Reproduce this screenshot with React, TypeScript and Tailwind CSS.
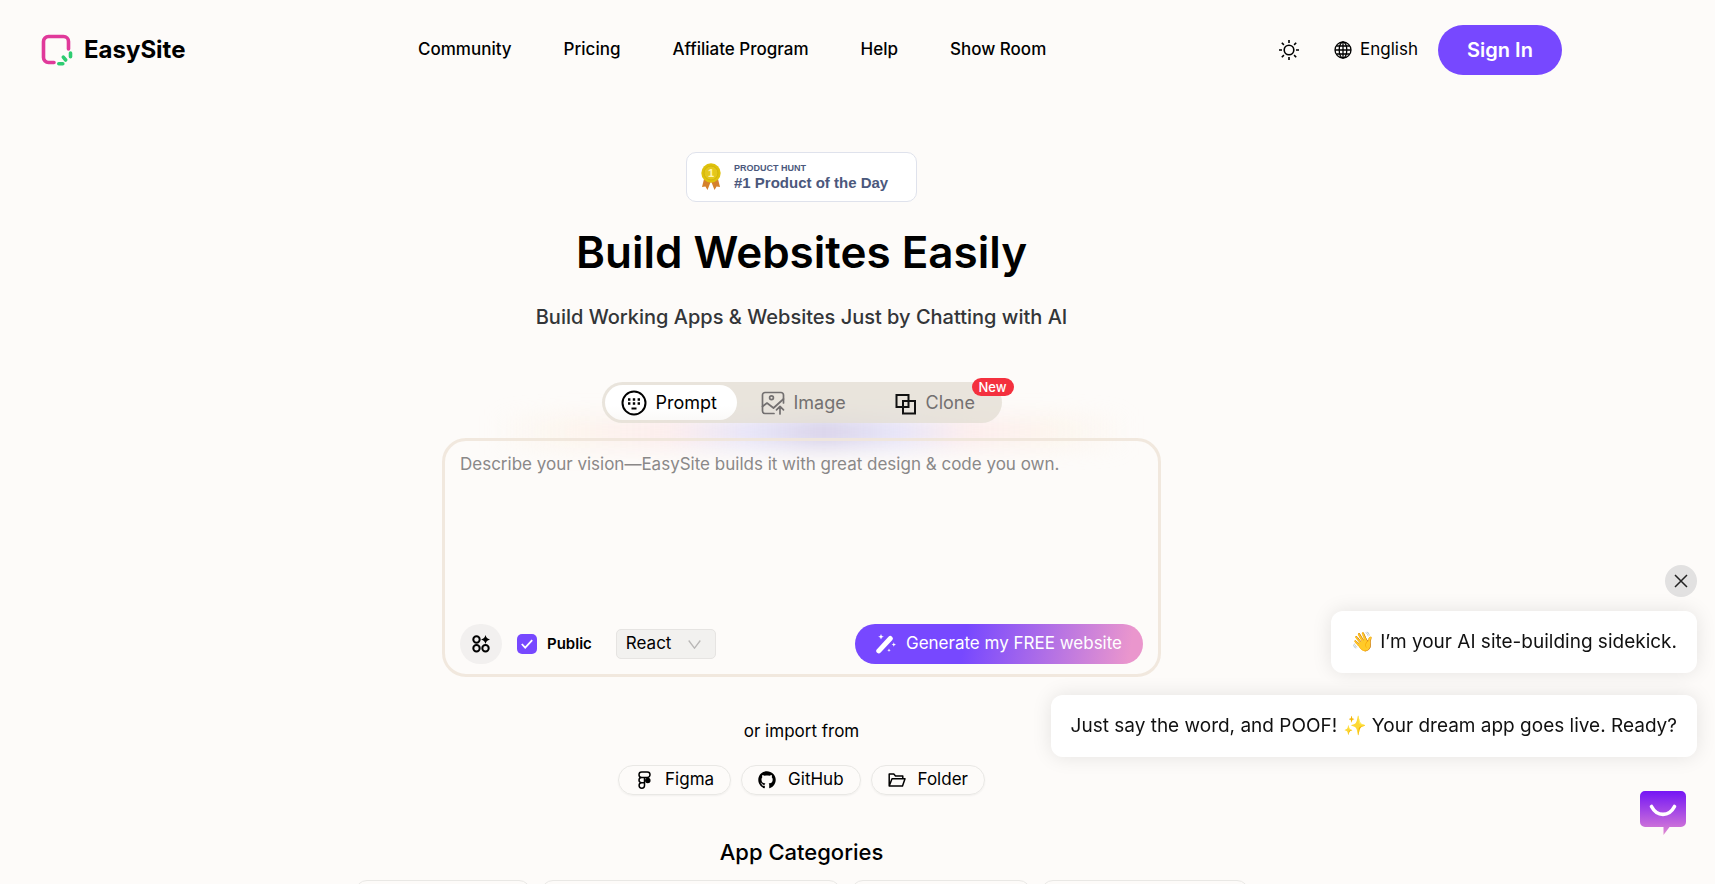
import React from "react";
import { FaGithub } from "react-icons/fa";

const navLinks = ["Community", "Pricing", "Affiliate Program", "Help", "Show Room"];

function Logo() {
  return (
    <a href="#" className="flex items-center gap-[11px]">
      <svg width="32" height="32" viewBox="0 0 32 32" fill="none" strokeLinecap="round" aria-hidden="true">
        <path d="M27.500 15V7.500a5 5 0 0 0-5-5H7.500a5 5 0 0 0-5 5v16a5 5 0 0 0 5 5H13" stroke="#e0399a" strokeWidth="3.600" />
        <path d="M29.500 19v3.800M22.300 23.200l2.400 2.800M17.800 29.800h4" stroke="#2ecc71" strokeWidth="3.600" />
      </svg>
      <span className="text-2xl font-bold">EasySite</span>
    </a>
  );
}

function SunIcon() {
  return (
    <svg width="22" height="22" viewBox="0 0 22 22" fill="none" stroke="currentColor" strokeWidth="1.600" aria-hidden="true">
      <circle cx="11" cy="11" r="4.800" />
      <path d="M11 1v3M11 18v3M1 11h3M18 11h3M3.800 3.800l2.100 2.100M16.100 16.100l2.100 2.100M3.800 18.200l2.100-2.100M16.100 5.900l2.100-2.100" />
    </svg>
  );
}

function GlobeIcon() {
  return (
    <svg width="18" height="18" viewBox="0 0 18 18" fill="none" stroke="currentColor" strokeWidth="1.300" aria-hidden="true">
      <circle cx="9" cy="9" r="8" />
      <ellipse cx="9" cy="9" rx="3.800" ry="8" />
      <path d="M9 1v16M1 9h16M2.300 5h13.400M2.300 13h13.400" />
    </svg>
  );
}

function MedalIcon() {
  return (
    <svg width="20" height="28" viewBox="0 0 20 28" aria-hidden="true">
      <path d="M3 16 1 24l3.400-.6L6.500 27 10 18zM17 16l2 8-3.400-.6L13.500 27 10 18z" fill="#d5812c" />
      <circle cx="10" cy="10" r="9.700" fill="#dfc20c" />
      <circle cx="10" cy="10" r="7" fill="#e4c71c" stroke="#d2b40a" strokeWidth="1" />
      <text x="10" y="14" textAnchor="middle" fontSize="11" fontWeight="700" fill="#fff6b8" fontFamily="Liberation Sans, sans-serif">1</text>
    </svg>
  );
}

function PromptIcon() {
  return (
    <svg width="26" height="26" viewBox="0 0 26 26" fill="none" stroke="currentColor" aria-hidden="true">
      <circle cx="13" cy="13" r="11.500" strokeWidth="2" />
      <path d="M7 9.500h2.400M11.800 9.500h2.400M16.600 9.500H19M7 13.500h2.400M11.800 13.500h2.400M16.600 13.500H19" strokeWidth="2.400" />
      <path d="M10.500 18.500h5" strokeWidth="2" />
    </svg>
  );
}

function ImageIcon() {
  return (
    <svg width="24" height="24" viewBox="0 0 24 24" fill="none" stroke="currentColor" strokeWidth="1.700" strokeLinecap="round" strokeLinejoin="round" aria-hidden="true">
      <path d="M22.500 12V4a2.500 2.500 0 0 0-2.500-2.500H4A2.500 2.500 0 0 0 1.500 4v16A2.500 2.500 0 0 0 4 22.500h9" />
      <circle cx="10.500" cy="6.800" r="1.900" />
      <path d="M1.500 15.500 6 12l6.500 5 10-9" />
      <path d="M19 23v-7.500M15.500 18.800l3.500-3.500 3.500 3.500" />
    </svg>
  );
}

function CloneIcon() {
  return (
    <svg width="22" height="24" viewBox="0 0 22 24" fill="none" stroke="#111" strokeWidth="2" aria-hidden="true">
      <path d="M1.500 4h12v12h-12zM8 10h12v12.500H8z" />
    </svg>
  );
}

function AppsIcon() {
  return (
    <svg width="18" height="18" viewBox="0 0 18 18" fill="none" stroke="currentColor" strokeWidth="2" aria-hidden="true">
      <circle cx="4.500" cy="4.500" r="3.200" />
      <circle cx="4.500" cy="13.300" r="3.200" />
      <circle cx="13.500" cy="13.300" r="3.200" />
      <path d="M13.500 0c.8 2.700 1.700 3.700 4.500 4.500-2.800.8-3.700 1.800-4.500 4.500-.8-2.700-1.700-3.700-4.500-4.500 2.800-.8 3.700-1.800 4.500-4.500z" fill="currentColor" stroke="none" />
    </svg>
  );
}

function WandIcon() {
  return (
    <svg width="20" height="20" viewBox="0 0 20 20" fill="currentColor" aria-hidden="true">
      <path d="M2.800 16.900 14.300 4.500" stroke="currentColor" strokeWidth="5" strokeLinecap="round" />
      <path d="M5 0l.8 1.900 2 .8-2 .8L5 5.500l-.8-2-2-.8 2-.8zM17.800 8.300l.6 1.600 1.600.6-1.600.7-.6 1.600-.6-1.600-1.600-.7 1.600-.6zM13 14.500l.5 1.200 1.200.5-1.200.5-.5 1.200-.5-1.200-1.200-.5 1.200-.5z" />
    </svg>
  );
}

function FigmaIcon() {
  return (
    <svg width="13" height="18" viewBox="0 0 13 18" fill="none" stroke="currentColor" strokeWidth="1.500" aria-hidden="true">
      <path d="M3.700 1h5.600a2.700 2.700 0 0 1 0 5.400H3.700a2.700 2.700 0 0 1 0-5.400zM6.500 6.400v8.100a2.700 2.700 0 1 1-2.800-2.700h2.800M3.700 6.400a2.700 2.700 0 0 0 0 5.400" />
      <circle cx="9.800" cy="9.600" r="2" fill="currentColor" />
    </svg>
  );
}

function FolderIcon() {
  return (
    <svg width="18" height="14" viewBox="0 0 18 14" fill="none" stroke="currentColor" strokeWidth="1.500" strokeLinejoin="round" aria-hidden="true">
      <path d="M1.200 13V1h4.600l1.700 2h7.300v2.700M1.200 13l2.800-7.300h13L14.500 13z" />
    </svg>
  );
}

function ChatIcon() {
  return (
    <svg width="46" height="45" viewBox="0 0 46 45" fill="none" aria-hidden="true">
      <defs>
        <linearGradient id="chat-fill" x1="0" y1="0" x2="0" y2="1">
          <stop offset="0" stopColor="#7416f5" />
          <stop offset=".75" stopColor="#c468dc" />
          <stop offset="1" stopColor="#e08bd0" />
        </linearGradient>
      </defs>
      <path d="M5 0h36a5 5 0 0 1 5 5v26a5 5 0 0 1-5 5H29.500L23.500 44V36H5a5 5 0 0 1-5-5V5a5 5 0 0 1 5-5z" fill="url(#chat-fill)" />
      <path d="M11.500 15.500c5.500 10.500 17.500 10.500 23 0" stroke="#fff" strokeWidth="3.600" strokeLinecap="round" />
    </svg>
  );
}

function Header() {
  return (
    <header className="flex h-[100px] items-center px-[41px]">
      <div className="w-[377px]">
        <Logo />
      </div>
      <nav className="flex flex-1 gap-[52px] text-[17px] font-medium">
        {navLinks.map((label) => (
          <a key={label} href="#" className="whitespace-nowrap">
            {label}
          </a>
        ))}
      </nav>
      <div className="flex items-center">
        <button type="button" aria-label="Toggle theme" className="mr-[34px]">
          <SunIcon />
        </button>
        <button type="button" className="mr-5 flex items-center gap-2 text-[17px]">
          <GlobeIcon />
          English
        </button>
        <button type="button" className="h-[50px] w-[124px] rounded-full bg-[#7748ff] text-xl font-semibold text-white">
          Sign In
        </button>
      </div>
    </header>
  );
}

function Tabs() {
  return (
    <div role="tablist" className="relative flex h-[41px] w-[400px] items-center rounded-full bg-[#e4dfd5]/80 p-[3px] text-lg text-[#737070]">
      <button type="button" role="tab" aria-selected="true" className="flex h-[35px] w-[132px] items-center gap-[9px] rounded-full bg-linear-to-b from-white from-60% to-white/80 pl-4 text-black">
        <PromptIcon />
        Prompt
      </button>
      <button type="button" role="tab" aria-selected="false" className="flex h-[35px] w-[134px] items-center gap-[9px] pl-6">
        <ImageIcon />
        Image
      </button>
      <button type="button" role="tab" aria-selected="false" className="flex h-[35px] flex-1 items-center gap-[9px] pl-6">
        <CloneIcon />
        Clone
      </button>
      <span className="absolute -right-3 -top-1 flex h-[18px] w-[42px] items-center justify-center rounded-full bg-[#f4303e] text-[13px] font-medium text-white">
        New
      </span>
    </div>
  );
}

function PromptCard() {
  return (
    <form className="relative flex h-[239px] w-[719px] flex-col justify-between rounded-3xl border-[3px] border-[#f0e6da]/90 px-[15px] pb-[10px] pt-[11px]">
      <textarea
        aria-label="Describe your vision"
        placeholder="Describe your vision—EasySite builds it with great design & code you own."
        className="h-[120px] w-full resize-none bg-transparent text-[17px] leading-6 outline-none placeholder:text-[#8a8888]"
      />
      <div className="flex items-center">
        <button type="button" aria-label="Integrations" className="flex h-10 w-[42px] items-center justify-center rounded-full bg-[#f2f0ef]">
          <AppsIcon />
        </button>
        <label className="ml-[15px] flex items-center gap-[10px] text-[15px] font-semibold">
          <span className="relative flex size-5">
            <input type="checkbox" defaultChecked className="size-5 appearance-none rounded-[5px] bg-[#7748ff]" />
            <svg className="pointer-events-none absolute left-1 top-1" width="12" height="12" viewBox="0 0 12 12" fill="none" stroke="#fff" strokeWidth="1.800" aria-hidden="true">
              <path d="M.8 6l3.400 3.600 7-7.400" />
            </svg>
          </span>
          Public
        </label>
        <div className="relative ml-6">
          <select aria-label="Framework" defaultValue="React" className="h-[30px] w-[100px] appearance-none rounded-[5px] border border-[#e6e4e2] bg-[#f2f1ef] pl-[9px] text-[17px]">
            <option>React</option>
          </select>
          <svg className="pointer-events-none absolute right-[15px] top-[11px]" width="13" height="9" viewBox="0 0 13 9" fill="none" stroke="#b9b7b6" strokeWidth="1.300" aria-hidden="true">
            <path d="M.7.500 6.500 8.200 12.300.500" />
          </svg>
        </div>
        <button type="button" className="ml-auto flex h-10 w-[288px] items-center justify-center gap-[10px] whitespace-nowrap rounded-full bg-[linear-gradient(100deg,#7748ff_38%,#ea96cd_95%)] text-[17px] text-white">
          <WandIcon />
          Generate my FREE website
        </button>
      </div>
    </form>
  );
}

function ImportButton({ icon, label }: { icon: React.ReactNode; label: string }) {
  return (
    <button type="button" className="flex h-[30px] items-center gap-3 rounded-full border border-[#e9e8e5] px-4 text-[17px] shadow-xs">
      <span className="flex w-[18px] justify-center">{icon}</span>
      {label}
    </button>
  );
}

function ChatWidget() {
  return (
    <aside className="fixed bottom-12 right-[18px] z-30 flex flex-col items-end text-[19px] text-[#111]">
      <button type="button" aria-label="Close" className="mb-[14px] flex size-8 items-center justify-center rounded-full bg-[#e2e1e1]">
        <svg width="14" height="14" viewBox="0 0 14 14" fill="none" stroke="#222" strokeWidth="1.500" aria-hidden="true">
          <path d="M1 1l12 12M13 1 1 13" />
        </svg>
      </button>
      <p className="mb-[22px] flex h-[62px] items-center whitespace-nowrap rounded-xl bg-white px-5 shadow-[0_0_20px_rgba(0,0,0,0.1)]">
        👋 I’m your AI site-building sidekick.
      </p>
      <p className="mb-[34px] flex h-[62px] items-center whitespace-nowrap rounded-xl bg-white px-5 shadow-[0_0_20px_rgba(0,0,0,0.1)]">
        Just say the word, and POOF! ✨ Your dream app goes live. Ready?
      </p>
      <button type="button" aria-label="Open chat" className="mr-[11px]">
        <ChatIcon />
      </button>
    </aside>
  );
}

export default function App() {
  return (
    <div className="h-screen overflow-hidden bg-[#fdfbf9] pr-28 font-['Inter',sans-serif] text-black">
      <Header />
      <main className="flex flex-col items-center">
        <a href="#" className="mt-[52px] flex h-[50px] w-[231px] items-center gap-[13px] rounded-[10px] border border-[#dfe2ec] bg-white pl-[14px] font-['Liberation_Sans',sans-serif] font-bold text-[#4b587c]">
          <MedalIcon />
          <span className="flex flex-col">
            <span className="text-[9px] leading-[12px]">PRODUCT HUNT</span>
            <span className="text-[15px] leading-[18px]">#1 Product of the Day</span>
          </span>
        </a>
        <h1 className="mt-[22px] text-[44px] font-semibold leading-[56px]">Build Websites Easily</h1>
        <h2 className="mt-[23px] text-xl font-medium text-[#333538]">Build Working Apps &amp; Websites Just by Chatting with AI</h2>
        <div className="relative mt-[51px] flex flex-col items-center gap-[15px]">
          <div className="pointer-events-none absolute left-[50px] right-[30px] top-[34px] h-[32px] bg-[linear-gradient(90deg,transparent,#fdeedd66_12%,#fbdcdf77_28%,#dcd9f8aa_40%,#cdc6e6cc_52%,#dcd9f8aa_64%,#fbdcdf77_74%,#fdeedd66_88%,transparent)] blur-[10px]" />
          <div className="relative z-10">
            <Tabs />
          </div>
          <PromptCard />
        </div>
        <p className="mt-[42px] text-[17px] leading-6">or import from</p>
        <div className="mt-[22px] flex gap-[10px]">
          <ImportButton icon={<FigmaIcon />} label="Figma" />
          <ImportButton icon={<FaGithub size={18} />} label="GitHub" />
          <ImportButton icon={<FolderIcon />} label="Folder" />
        </div>
        <h3 className="mt-[41px] text-[22px] font-medium leading-8">App Categories</h3>
        <div className="mt-[12px] flex gap-[10px]">
          <div className="h-12 w-[176px] rounded-xl border border-[#e9e8e5]" />
          <div className="h-12 w-[300px] rounded-xl border border-[#e9e8e5]" />
          <div className="h-12 w-[180px] rounded-xl border border-[#e9e8e5]" />
          <div className="h-12 w-[208px] rounded-xl border border-[#e9e8e5]" />
        </div>
      </main>
      <ChatWidget />
    </div>
  );
}
